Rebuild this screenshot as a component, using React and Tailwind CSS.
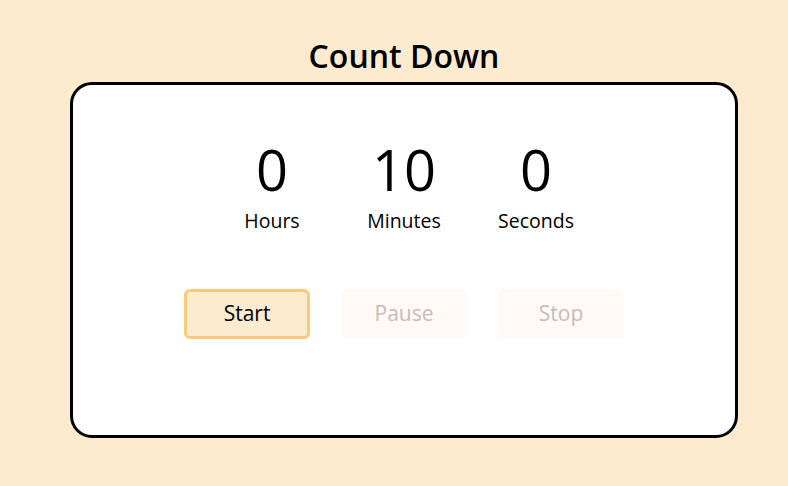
export default function App() {
  const units = [
    { value: 0, label: "Hours" },
    { value: 10, label: "Minutes" },
    { value: 0, label: "Seconds" },
  ];

  return (
    <div className="min-h-[486px] w-full bg-[#fdebd0] pt-[35px]" style={{ fontFamily: '"Open Sans", sans-serif' }}>
      <div className="ml-[70px] w-[668px]">
        <h1 className="text-center text-[32px] leading-[42px] font-semibold text-black">Count Down</h1>
        <div className="mt-[5px] h-[356px] rounded-[22px] border-[3px] border-black bg-white pt-[52px]">
          <div className="flex justify-center gap-[32px]">
            {units.map((u) => (
              <div key={u.label} className="flex w-[100px] flex-col items-center">
                <span className="text-[56px] leading-[64px] font-medium text-black">{u.value}</span>
                <span className="mt-[7px] text-[19.5px] leading-[26px] text-black">{u.label}</span>
              </div>
            ))}
          </div>
          <div className="mt-[55px] flex justify-center gap-[31px]">
            <button className="h-[50px] w-[126px] rounded-[6px] border-[3px] border-[#fcc87a] bg-[#fdebd0] text-[21px] text-black">Start</button>
            <button disabled className="h-[50px] w-[126px] rounded-[6px] bg-[#fffaf6] text-[21px] text-[#c4bcbc]">Pause</button>
            <button disabled className="h-[50px] w-[126px] rounded-[6px] bg-[#fffaf6] text-[21px] text-[#c4bcbc]">Stop</button>
          </div>
        </div>
      </div>
    </div>
  );
}
